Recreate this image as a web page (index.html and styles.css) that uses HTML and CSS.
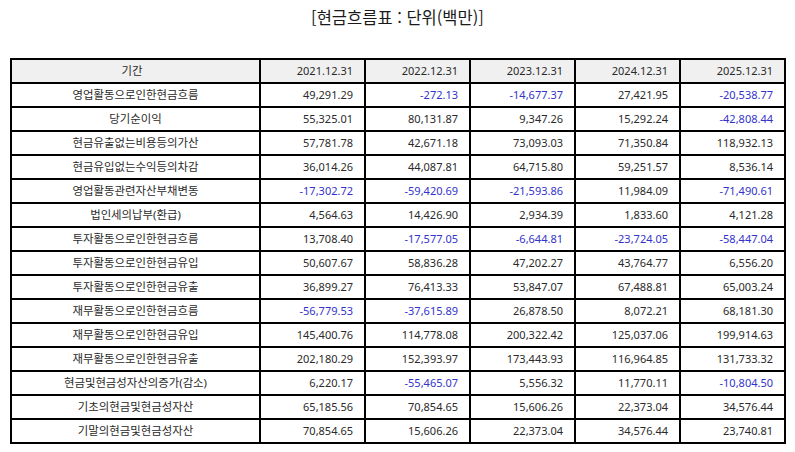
FILE: index.html
```html
<!DOCTYPE html>
<html lang="ko">
<head>
<meta charset="utf-8">
<title>현금흐름표</title>
<link rel="stylesheet" href="styles.css">
</head>
<body>
<div class="page">
  <h1 class="title">[현금흐름표 : 단위(백만)]</h1>
  <table class="cf">
    <thead>
      <tr>
        <th class="c-label">기간</th>
        <th class="c-num">2021.12.31</th>
        <th class="c-num">2022.12.31</th>
        <th class="c-num">2023.12.31</th>
        <th class="c-num">2024.12.31</th>
        <th class="c-num">2025.12.31</th>
      </tr>
    </thead>
    <tbody>
      <tr><td class="lbl">영업활동으로인한현금흐름</td><td>49,291.29</td><td class="neg">-272.13</td><td class="neg">-14,677.37</td><td>27,421.95</td><td class="neg">-20,538.77</td></tr>
      <tr><td class="lbl">당기순이익</td><td>55,325.01</td><td>80,131.87</td><td>9,347.26</td><td>15,292.24</td><td class="neg">-42,808.44</td></tr>
      <tr><td class="lbl">현금유출없는비용등의가산</td><td>57,781.78</td><td>42,671.18</td><td>73,093.03</td><td>71,350.84</td><td>118,932.13</td></tr>
      <tr><td class="lbl">현금유입없는수익등의차감</td><td>36,014.26</td><td>44,087.81</td><td>64,715.80</td><td>59,251.57</td><td>8,536.14</td></tr>
      <tr><td class="lbl">영업활동관련자산부채변동</td><td class="neg">-17,302.72</td><td class="neg">-59,420.69</td><td class="neg">-21,593.86</td><td>11,984.09</td><td class="neg">-71,490.61</td></tr>
      <tr><td class="lbl">법인세의납부(환급)</td><td>4,564.63</td><td>14,426.90</td><td>2,934.39</td><td>1,833.60</td><td>4,121.28</td></tr>
      <tr><td class="lbl">투자활동으로인한현금흐름</td><td>13,708.40</td><td class="neg">-17,577.05</td><td class="neg">-6,644.81</td><td class="neg">-23,724.05</td><td class="neg">-58,447.04</td></tr>
      <tr><td class="lbl">투자활동으로인한현금유입</td><td>50,607.67</td><td>58,836.28</td><td>47,202.27</td><td>43,764.77</td><td>6,556.20</td></tr>
      <tr><td class="lbl">투자활동으로인한현금유출</td><td>36,899.27</td><td>76,413.33</td><td>53,847.07</td><td>67,488.81</td><td>65,003.24</td></tr>
      <tr><td class="lbl">재무활동으로인한현금흐름</td><td class="neg">-56,779.53</td><td class="neg">-37,615.89</td><td>26,878.50</td><td>8,072.21</td><td>68,181.30</td></tr>
      <tr><td class="lbl">재무활동으로인한현금유입</td><td>145,400.76</td><td>114,778.08</td><td>200,322.42</td><td>125,037.06</td><td>199,914.63</td></tr>
      <tr><td class="lbl">재무활동으로인한현금유출</td><td>202,180.29</td><td>152,393.97</td><td>173,443.93</td><td>116,964.85</td><td>131,733.32</td></tr>
      <tr><td class="lbl">현금및현금성자산의증가(감소)</td><td>6,220.17</td><td class="neg">-55,465.07</td><td>5,556.32</td><td>11,770.11</td><td class="neg">-10,804.50</td></tr>
      <tr><td class="lbl">기초의현금및현금성자산</td><td>65,185.56</td><td>70,854.65</td><td>15,606.26</td><td>22,373.04</td><td>34,576.44</td></tr>
      <tr><td class="lbl">기말의현금및현금성자산</td><td>70,854.65</td><td>15,606.26</td><td>22,373.04</td><td>34,576.44</td><td>23,740.81</td></tr>
    </tbody>
  </table>
</div>
</body>
</html>
```

FILE: styles.css
```css
html, body {
  margin: 0;
  padding: 0;
  background: #ffffff;
}

.page {
  padding: 0 10px;
  font-family: "Noto Sans", "Noto Sans CJK KR", sans-serif;
  color: #2a2a2a;
}

.title {
  margin: 0;
  height: 34px;
  line-height: 34px;
  font-size: 16.5px;
  font-weight: normal;
  text-align: center;
  color: #1a1a1a;
  font-family: "Noto Sans CJK KR", sans-serif;
}

.cf {
  margin-top: 24px;
  width: 776px;
  table-layout: fixed;
  border-collapse: separate;
  border-spacing: 0;
  border: 1px solid #000000;
  font-size: 11px;
}

.cf th,
.cf td {
  box-sizing: border-box;
  height: 24px;
  padding: 0 11px 0 4px;
  border: 1px solid #000000;
  text-align: right;
  font-weight: normal;
  white-space: nowrap;
  line-height: 22px;
}

.cf th {
  background: #f0f0f0;
}

.cf .c-label {
  width: 249px;
  text-align: center;
  font-size: 11.4px;
}

.cf .c-num {
  width: 105px;
}

.cf .lbl {
  text-align: center;
  font-size: 11.4px;
  padding: 0 4px;
}

.cf .neg {
  color: #3333cc;
}
```
